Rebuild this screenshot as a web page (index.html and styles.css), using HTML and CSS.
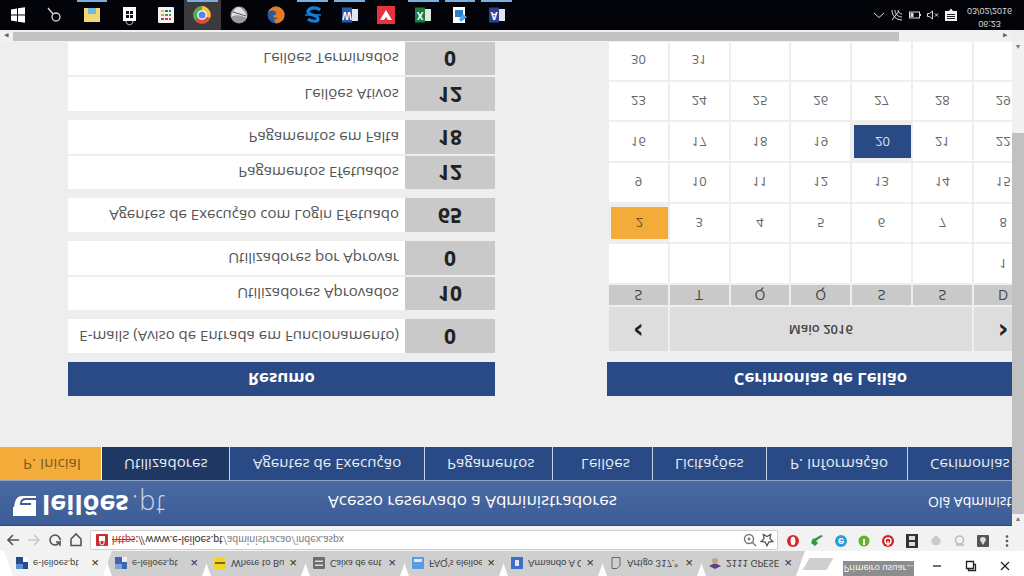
FILE: index.html
```html
<!DOCTYPE html>
<html lang="pt">
<head>
<meta charset="utf-8">
<title>e-leiloes.pt</title>
<link rel="stylesheet" href="styles.css">
</head>
<body>
<div class="screen">
  <div class="tabstrip">
    <div class="tab tab-active"><svg class="fav" viewBox="0 0 12 12"><rect width="12" height="12" fill="#2a4a8c"/><rect x="0" y="0" width="7" height="5" fill="#5b8fd0"/><rect x="7" y="7" width="5" height="5" fill="#fff"/></svg><span class="tab-title">e-leiloes.pt</span><span class="tab-x">✕</span></div>
    <div class="tab"><svg class="fav" viewBox="0 0 12 12"><rect width="12" height="12" fill="#3f66a8"/><rect x="0" y="0" width="7" height="5" fill="#7ba4d8"/><rect x="7" y="7" width="5" height="5" fill="#eee"/></svg><span class="tab-title">e-leiloes.pt</span><span class="tab-x">✕</span></div>
    <div class="tab"><svg class="fav" viewBox="0 0 12 12"><rect width="12" height="12" rx="1" fill="#f5d327"/><rect x="1" y="5" width="10" height="2" fill="#7a6a10"/></svg><span class="tab-title">Where to Bu</span><span class="tab-x">✕</span></div>
    <div class="tab"><svg class="fav" viewBox="0 0 12 12"><rect width="12" height="12" rx="1" fill="#6d6d6d"/><rect x="2" y="3" width="8" height="1.5" fill="#ddd"/><rect x="2" y="7" width="8" height="1.5" fill="#ddd"/></svg><span class="tab-title">Caixa de ent</span><span class="tab-x">✕</span></div>
    <div class="tab"><svg class="fav" viewBox="0 0 12 12"><rect width="12" height="12" rx="1" fill="#5a9be8"/><rect x="2" y="7" width="8" height="3" fill="#dce9fa"/></svg><span class="tab-title">FAQ's eleiloe</span><span class="tab-x">✕</span></div>
    <div class="tab"><svg class="fav" viewBox="0 0 12 12"><rect width="12" height="12" fill="#3d6fc4"/><rect x="4" y="3" width="4" height="6" fill="#dce6f6"/></svg><span class="tab-title">Armando A O</span><span class="tab-x">✕</span></div>
    <div class="tab"><svg class="fav" viewBox="0 0 12 12"><path d="M2 .5h5l3 3v8H2z" fill="none" stroke="#666"/></svg><span class="tab-title">Artigo 317.º</span><span class="tab-x">✕</span></div>
    <div class="tab"><svg class="fav" viewBox="0 0 12 12"><path d="M6 0l6 3-6 3-6-3z" fill="#5a3f8a"/><circle cx="6" cy="8" r="3" fill="#c9a27a"/></svg><span class="tab-title">2111 GPESE</span><span class="tab-x">✕</span></div>
    <div class="newtab"></div>
    <div class="win-area">
      <div class="profile">Primeiro usuar…</div>
      <svg class="win-btn" viewBox="0 0 12 12"><path d="M2 6h8" stroke="#222" stroke-width="1.3"/></svg>
      <svg class="win-btn" viewBox="0 0 12 12"><path d="M3.5 3V1.5h7v6H9M1.5 3.5h7v7h-7z" fill="none" stroke="#222" stroke-width="1.3"/></svg>
      <svg class="win-btn" viewBox="0 0 12 12"><path d="M2 2l8 8M10 2l-8 8" stroke="#222" stroke-width="1.2"/></svg>
    </div>
  </div>

  <div class="toolbar">
    <svg class="nav-ic" viewBox="0 0 16 16"><path d="M14 8H3M8 3L3 8l5 5" fill="none" stroke="#555" stroke-width="1.6"/></svg>
    <svg class="nav-ic" viewBox="0 0 16 16"><path d="M2 8h11M8 3l5 5-5 5" fill="none" stroke="#c9c9c9" stroke-width="1.6"/></svg>
    <svg class="nav-ic" viewBox="0 0 16 16"><path d="M13 8a5 5 0 1 1-1.6-3.7L13 6V2M13 6H9" fill="none" stroke="#555" stroke-width="1.6"/></svg>
    <svg class="nav-ic" viewBox="0 0 16 16"><path d="M3 2.5h10V9l-5 5-5-5z" fill="none" stroke="#555" stroke-width="1.6"/></svg>
    <div class="urlbar">
      <svg class="sec-ic" viewBox="0 0 12 12"><rect width="12" height="12" rx="1" fill="#c9302c"/><rect x="3" y="5" width="6" height="5" fill="#fff"/><path d="M4 5V3a2 2 0 0 1 4 0v2" fill="none" stroke="#fff"/></svg>
      <span class="url"><span class="url-https">https</span><span class="url-host">://www.e-leiloes.pt</span>/administracao/index.aspx</span>
      <span class="url-spacer"></span>
      <svg class="url-ic" viewBox="0 0 14 14"><circle cx="6" cy="8" r="4.5" fill="none" stroke="#777" stroke-width="1.4"/><circle cx="6" cy="8" r="1.4" fill="#777"/><path d="M9 5l4-4" stroke="#777" stroke-width="1.4"/></svg>
      <svg class="url-ic" viewBox="0 0 14 14"><path d="M7 1.2l1.8 3.8 4.1.5-3 2.9.8 4.1L7 10.5l-3.7 2 .8-4.1-3-2.9 4.1-.5z" fill="none" stroke="#555" stroke-width="1.3"/></svg>
    </div>
    <div class="exts">
      <svg class="ext" viewBox="0 0 14 14"><circle cx="7" cy="7" r="6" fill="#d8262c"/><ellipse cx="7" cy="7" rx="2.4" ry="4.2" fill="#fff"/></svg>
      <svg class="ext" viewBox="0 0 14 14"><path d="M1 5l4-3 3 3-2 2 7 5-2 1-7-4-1 1z" fill="#2e9a3c"/></svg>
      <svg class="ext" viewBox="0 0 14 14"><circle cx="7" cy="7" r="6" fill="#2a9fd8"/><text x="7" y="10.5" class="ext-letter">e</text></svg>
      <svg class="ext" viewBox="0 0 14 14"><circle cx="7" cy="7" r="5.5" fill="#62b22f"/><path d="M7 3v6" stroke="#fff" stroke-width="2"/></svg>
      <svg class="ext" viewBox="0 0 14 14"><circle cx="7" cy="7" r="6" fill="#d42027"/><circle cx="7" cy="7" r="3" fill="none" stroke="#fff" stroke-width="1.4"/><path d="M7 2v5" stroke="#fff" stroke-width="1.4"/></svg>
      <svg class="ext" viewBox="0 0 14 14"><rect x="1" width="12" height="14" fill="#333"/><rect x="4" y="2" width="6" height="4" fill="#ddd"/><rect x="4" y="8" width="6" height="4" fill="#ddd"/></svg>
      <svg class="ext" viewBox="0 0 14 14"><path d="M2 8l5 5 5-5-2-5H4z" fill="#c9c9c9"/></svg>
      <svg class="ext" viewBox="0 0 14 14"><circle cx="6.5" cy="8" r="4" fill="none" stroke="#bdbdbd" stroke-width="1.6"/><path d="M3 3h8" stroke="#bdbdbd" stroke-width="1.6"/></svg>
      <svg class="ext" viewBox="0 0 14 14"><rect x="1" y="1" width="12" height="12" rx="1" fill="#555"/><path d="M7 3l3 5a3 3 0 0 1-6 0z" fill="#ddd"/></svg>
      <svg class="ext ext-menu" viewBox="0 0 14 14"><circle cx="7" cy="2.5" r="1.3" fill="#555"/><circle cx="7" cy="7" r="1.3" fill="#555"/><circle cx="7" cy="11.5" r="1.3" fill="#555"/></svg>
    </div>
  </div>

  <div class="page">
    <div class="viewport">
      <header class="site-head">
        <div class="logo"><svg class="logo-mark" viewBox="0 0 23 20"><path d="M0 0h23v20H9c-4 0-6-3-7-6L1 9H0z" fill="#fff"/><path d="M7 12h11M8 12c0 3 2 5 5 5h10" fill="none" stroke="#3d5d98" stroke-width="1.8"/></svg><b class="logo-name">leilões</b><span class="logo-tld">.pt</span></div>
        <div class="access">Acesso reservado a Administradores</div>
        <div class="hello">Olá Administrador</div>
      </header>
      <nav class="site-nav">
        <a class="nav-item nav-home">P. Inicial</a>
        <a class="nav-item nav-current">Utilizadores</a>
        <a class="nav-item w-agents">Agentes de Execução</a>
        <a class="nav-item w-pay">Pagamentos</a>
        <a class="nav-item w-auc">Leilões</a>
        <a class="nav-item w-bid">Licitações</a>
        <a class="nav-item w-info">P. Informação</a>
        <a class="nav-item w-cer">Cerimonias</a>
      </nav>
      <main class="columns">
        <section class="col">
          <h2 class="panel-title">Resumo</h2>
          <div class="group">
            <div class="stat"><span class="stat-label">E-mails (Aviso de Entrada em Funcionamento)</span><span class="stat-value">0</span></div>
          </div>
          <div class="group">
            <div class="stat"><span class="stat-label">Utilizadores Aprovados</span><span class="stat-value">10</span></div>
            <div class="stat"><span class="stat-label">Utilizadores por Aprovar</span><span class="stat-value">0</span></div>
          </div>
          <div class="group">
            <div class="stat"><span class="stat-label">Agentes de Execução com Login Efetuado</span><span class="stat-value">65</span></div>
          </div>
          <div class="group">
            <div class="stat"><span class="stat-label">Pagamentos Efetuados</span><span class="stat-value">12</span></div>
            <div class="stat"><span class="stat-label">Pagamentos em Falta</span><span class="stat-value">18</span></div>
          </div>
          <div class="group">
            <div class="stat"><span class="stat-label">Leilões Ativos</span><span class="stat-value">12</span></div>
            <div class="stat"><span class="stat-label">Leilões Terminados</span><span class="stat-value">0</span></div>
          </div>
        </section>
        <section class="col">
          <h2 class="panel-title">Cerimonias de Leilão</h2>
          <div class="calendar">
            <div class="cal-nav">‹</div><div class="cal-month">Maio 2016</div><div class="cal-nav">›</div>
            <div class="wd">S</div><div class="wd">T</div><div class="wd">Q</div><div class="wd">Q</div><div class="wd">S</div><div class="wd">S</div><div class="wd">D</div>
            <div class="day"></div><div class="day"></div><div class="day"></div><div class="day"></div><div class="day"></div><div class="day"></div><div class="day">1</div>
            <div class="day day-orange">2</div><div class="day">3</div><div class="day">4</div><div class="day">5</div><div class="day">6</div><div class="day">7</div><div class="day">8</div>
            <div class="day">9</div><div class="day">10</div><div class="day">11</div><div class="day">12</div><div class="day">13</div><div class="day">14</div><div class="day">15</div>
            <div class="day">16</div><div class="day">17</div><div class="day">18</div><div class="day">19</div><div class="day day-blue">20</div><div class="day">21</div><div class="day">22</div>
            <div class="day">23</div><div class="day">24</div><div class="day">25</div><div class="day">26</div><div class="day">27</div><div class="day">28</div><div class="day">29</div>
            <div class="day">30</div><div class="day">31</div><div class="day"></div><div class="day"></div><div class="day"></div><div class="day"></div><div class="day"></div>
          </div>
        </section>
      </main>
    </div>
    <div class="vscroll">
      <div class="vs-arrow">▾</div>
      <div class="vs-thumb"></div>
      <div class="vs-rest"></div>
      <div class="vs-arrow">▴</div>
    </div>
  </div>

  <div class="hscroll">
    <div class="hs-arrow">◂</div>
    <div class="hs-thumb"></div>
    <div class="hs-rest"></div>
    <div class="hs-arrow">▸</div>
    <div class="hs-corner"></div>
  </div>

  <footer class="taskbar">
    <div class="tb-app"><svg class="tb-ic" viewBox="0 0 24 24"><path d="M5 6.5l6-1v6H5zM12 5.3l7-1.1v7.3h-7zM5 12.5h6v6l-6-1zM12 12.5h7v7.3l-7-1.100z" fill="#fff"/></svg></div>
    <div class="tb-app"><svg class="tb-ic" viewBox="0 0 24 24"><circle cx="13" cy="10" r="4" fill="none" stroke="#ddd" stroke-width="1.3"/><path d="M10 13l-5 6" stroke="#ddd" stroke-width="1.3"/></svg></div>
    <div class="tb-app tb-open"><svg class="tb-ic" viewBox="0 0 24 24"><path d="M4 5h16v14H4z" fill="#f3d774"/><path d="M8 13h8v6H8z" fill="#6fb8e8"/></svg></div>
    <div class="tb-app"><svg class="tb-ic" viewBox="0 0 24 24"><path d="M6 6h13v14H6z" fill="#fff"/><path d="M9 9h3v3H9zM13 9h3v3h-3zM9 13h3v3H9zM13 13h3v3h-3z" fill="#111"/><path d="M9 6c0-5 7-5 7 0" fill="none" stroke="#ccc"/></svg></div>
    <div class="tb-app"><svg class="tb-ic" viewBox="0 0 24 24"><rect x="4" y="4" width="16" height="16" rx="1" fill="#f2f2f2"/><path d="M7 7h3v2H7z" fill="#d33"/><path d="M11 7h3v2h-3z" fill="#d33"/><path d="M15 7h2v2h-2z" fill="#d33"/><path d="M7 11h3v2H7z" fill="#e8a020"/><path d="M11 11h3v2h-3z" fill="#3a3"/><path d="M15 11h2v2h-2z" fill="#3a3"/><path d="M7 15h3v2H7z" fill="#e8c020"/><path d="M11 15h3v2h-3z" fill="#36a"/><path d="M15 15h2v2h-2z" fill="#36a"/></svg></div>
    <div class="tb-app tb-open tb-active"><svg class="tb-ic" viewBox="0 0 24 24"><circle cx="12" cy="12" r="9" fill="#e2493a"/><path d="M12 12L5 7a9 9 0 0 0 7 14z" fill="#4caf50"/><path d="M12 12l8-3a9 9 0 0 1-8 12z" fill="#f6c53c"/><circle cx="12" cy="12" r="4.2" fill="#4a8af0" stroke="#fff" stroke-width="1.3"/></svg></div>
    <div class="tb-app"><svg class="tb-ic" viewBox="0 0 24 24"><circle cx="12" cy="12" r="8.5" fill="#9a9a9a"/><path d="M4 10c5 3 10 2 16-1-1 6-5 10-9 11-4-2-6-6-7-10z" fill="#e3e3e3"/><path d="M6 15l13-4" stroke="#555"/></svg></div>
    <div class="tb-app"><svg class="tb-ic" viewBox="0 0 24 24"><circle cx="12" cy="12" r="8.5" fill="#2a5a9e"/><path d="M12 3.5a8.5 8.5 0 1 1-8 11c2 2 6 3 8 0 1-2-1-3-3-3 0-2 3-3 5-2-1-2-3-2-4-2 1-2 1-3 2-4z" fill="#e8791f"/></svg></div>
    <div class="tb-app tb-open"><svg class="tb-ic" viewBox="0 0 24 24"><path d="M19 17c-3 3-10 3-12-1-1-5 10-3 10-8 0-3-6-3-10 0" fill="none" stroke="#0f7fe0" stroke-width="3.2"/><path d="M4 12h16" stroke="#0f7fe0" stroke-width="1.5"/></svg></div>
    <div class="tb-app tb-open"><svg class="tb-ic" viewBox="0 0 24 24"><rect x="11" y="6" width="9" height="12" fill="#dfe6f2"/><rect x="4" y="4.5" width="10" height="15" fill="#2a5aa8"/><text x="9" y="15.5" class="tb-letter">W</text></svg></div>
    <div class="tb-app"><svg class="tb-ic" viewBox="0 0 24 24"><rect x="3" y="3" width="18" height="18" fill="#e5323e"/><path d="M6 7l6 10 6-10h-4l-2 3-2-3z" fill="#fff"/></svg></div>
    <div class="tb-app tb-open"><svg class="tb-ic" viewBox="0 0 24 24"><rect x="11" y="6" width="9" height="12" fill="#dcebdf"/><rect x="4" y="4.5" width="10" height="15" fill="#1f7a45"/><text x="9" y="15.5" class="tb-letter">X</text></svg></div>
    <div class="tb-app tb-open"><svg class="tb-ic" viewBox="0 0 24 24"><path d="M5 4h12v16H5z" fill="#fff"/><path d="M7 10h8v7H7z" fill="#2a7fd0"/><path d="M13 5l6 5-4 3-4-5z" fill="#5aa2e0"/></svg></div>
    <div class="tb-app tb-open"><svg class="tb-ic" viewBox="0 0 24 24"><rect x="11" y="6" width="9" height="12" fill="#dfe3f2"/><rect x="4" y="4.5" width="10" height="15" fill="#2f3f92"/><text x="9" y="15.5" class="tb-letter">A</text></svg></div>
    <div class="tb-spacer"></div>
    <div class="tray">
      <svg class="tray-ic" viewBox="0 0 14 14"><path d="M2 9l5-4.5L12 9" fill="none" stroke="#ddd" stroke-width="1"/></svg>
      <svg class="tray-ic" viewBox="0 0 14 14"><path d="M2 12c0-6 4-10 10-10M5 12c0-4 3-7 7-7M8 12c0-2 2-4 4-4" fill="none" stroke="#ddd"/><path d="M2 2l7 9" stroke="#ddd"/></svg>
      <svg class="tray-ic" viewBox="0 0 14 14"><rect x="1.5" y="4" width="10" height="6" fill="none" stroke="#ddd"/><rect x="2.5" y="5" width="3" height="4" fill="#ddd"/><rect x="12" y="6" width="1" height="2" fill="#ddd"/></svg>
      <svg class="tray-ic" viewBox="0 0 14 14"><path d="M1.5 5.500h2l3-2.500v8l-3-2.500h-2z" fill="none" stroke="#ddd"/><path d="M9 5.500l3 3M12 5.500l-3 3" stroke="#ddd"/></svg>
      <svg class="tray-ic" viewBox="0 0 14 14"><path d="M1 1h12v10H1z" fill="#f4f4f4"/><path d="M3 3.500h8M3 5.500h8M3 7.500h8" stroke="#222"/><path d="M5 11h4l-2 2.500z" fill="#f4f4f4"/></svg>
      <div class="clock"><div>06:23</div><div>03/02/2016</div></div>
    </div>
  </footer>
</div>
</body>
</html>
```
FILE: styles.css
```css
* { box-sizing: border-box; }
html, body { margin: 0; padding: 0; background: #000; }
body { width: 1024px; height: 576px; overflow: hidden; font-family: "Open Sans", "Liberation Sans", sans-serif; }
.screen {
  width: 1024px; height: 576px; overflow: hidden;
  display: flex; flex-direction: column;
  transform: scaleY(-1);
  background: #fff;
}

/* browser tabs */
.tabstrip { height: 25px; flex: none; display: flex; align-items: stretch; background: #fff; padding-left: 4px; }
.tab {
  width: 108px; margin-right: -9px; flex: none;
  display: flex; align-items: center; padding: 0 13px 0 12px; gap: 5px;
  background: #cfcfcf; color: #444;
  clip-path: polygon(9px 0, calc(100% - 9px) 0, 100% 100%, 0 100%);
}
.tab-active { background: #f2f2f2; position: relative; z-index: 1; }
.fav { width: 12px; height: 12px; flex: none; }
.tab-title { flex: 1; white-space: nowrap; overflow: hidden; font-family: Lato, sans-serif; font-size: 9.5px; }
.tab-x { font-size: 10px; color: #333; flex: none; }
.newtab { width: 24px; height: 12px; margin: 6px 0 0 10px; background: #cfcfcf; transform: skewX(30deg); flex: none; }
.win-area { flex: 1; display: flex; justify-content: flex-end; align-items: flex-start; padding-right: 2px; }
.profile { width: 71px; height: 15px; background: #8d8d8d; color: #fff; font-size: 9px; line-height: 15px; text-align: center; margin-right: 6px; white-space: nowrap; overflow: hidden; }
.win-btn { width: 12px; height: 12px; margin: 4px 11px 0; flex: none; }

/* browser toolbar */
.toolbar { height: 25px; flex: none; display: flex; align-items: flex-start; background: #f2f2f2; padding: 1px 0 0 5px; }
.nav-ic { width: 16px; height: 16px; margin: 2px 5px 0 0; flex: none; }
.urlbar { width: 691px; height: 20px; margin-left: 1px; background: #fff; border: 1px solid #cfcfcf; border-radius: 2px; display: flex; align-items: center; padding: 0 3px 0 5px; font-family: Lato, sans-serif; font-size: 10.5px; color: #808080; }
.sec-ic { width: 12px; height: 12px; flex: none; margin-right: 4px; }
.url { white-space: nowrap; }
.url-https { color: #c9302c; text-decoration: line-through; }
.url-host { color: #333; }
.url-spacer { flex: 1; }
.url-ic { width: 14px; height: 14px; margin-left: 3px; flex: none; }
.exts { flex: 1; display: flex; padding: 2px 0 0 8.5px; }
.ext { width: 14px; height: 14px; margin-right: 9.8px; flex: none; }
.ext-letter { font-family: "Liberation Sans", sans-serif; font-size: 11px; font-weight: 700; fill: #fff; text-anchor: middle; }

/* page */
.page { height: 484px; flex: none; display: flex; background: #eee; }
.viewport { width: 1012px; flex: none; overflow: hidden; }
.site-head { width: 1100px; height: 46px; display: flex; align-items: center; background: linear-gradient(#3d5d98, #4a69a0); color: #fff; border-bottom: 1px solid #8ea3c6; border-top: 1px solid #2d4a80; }
.logo { width: 328px; padding: 0 0 5px 13px; display: flex; align-items: flex-end; font-size: 27px; line-height: 30px; color: #fff; }
.logo-mark { width: 23px; height: 20px; margin: 0 6px 6px 0; flex: none; }
.logo-name { font-weight: 700; }
.logo-tld { font-weight: 300; color: #c8d2e4; margin-left: 3px; letter-spacing: 1px; }
.access { width: 600px; font-size: 17px; }
.hello { font-size: 14px; white-space: nowrap; }
.site-nav { width: 1100px; height: 33px; display: flex; background: #2a4a85; color: #e8edf5; font-size: 15px; letter-spacing: .06px; line-height: 31px; }
.nav-item { padding-left: 23px; width: 114px; border-right: 1px solid #c5cfe0; flex: none; white-space: nowrap; }
.nav-home { width: 102px; background: #f3ac39; color: #7a5a20; border-right: 1px solid #fff; }
.nav-current { width: 128px; background: #1e3763; padding-left: 22px; }
.w-agents { width: 195px; }
.w-pay { width: 128px; padding-left: 22px; }
.w-auc { width: 100px; padding-left: 28px; }
.w-bid { padding-left: 22px; }
.w-info { width: 141px; }
.w-cer { padding-left: 22px; width: 120px; border-right: 0; }
.columns { width: 1034px; display: flex; padding: 51px 0 0 68px; gap: 112px; }
.col { width: 427px; flex: none; }
.panel-title { height: 34px; margin: 0 0 9px; background: #2a4a85; color: #fff; font-size: 16.7px; font-weight: 700; line-height: 33px; text-align: center; }
.group { display: flex; flex-direction: column; gap: 2px; margin-bottom: 9px; }
.stat { height: 33.7px; display: flex; flex: none; }
.stat-label { width: 337px; background: #fff; color: #555; font-size: 15px; line-height: 33px; text-align: right; padding-right: 6px; white-space: nowrap; }
.stat-value { width: 90px; background: #c9c9c9; color: #222; font-size: 21px; font-weight: 700; line-height: 32px; text-align: center; }

/* calendar */
.calendar { display: grid; grid-template-columns: repeat(7, 58.8px); gap: 2px; padding: 2px 0 0 2px; grid-template-rows: 44px 20px; grid-auto-rows: 38.7px; }
.cal-nav { background: #ddd; color: #222; font: 700 26px/40px "DejaVu Sans", sans-serif; text-align: center; }
.cal-month { grid-column: span 5; background: #ddd; color: #444; font-size: 13px; font-weight: 600; line-height: 43px; text-align: center; }
.wd { background: #c9c9c9; color: #444; font-size: 14px; line-height: 20px; text-align: center; }
.day { background: #fff; color: #666; font-size: 13px; display: flex; align-items: center; justify-content: center; }
.day-orange, .day-blue { background-clip: content-box; padding: 3px 0 3px 2px; }
.day-orange { background-color: #f3ac39; color: #6a5020; }
.day-blue { background-color: #2a4a85; color: #d8e0ee; }

/* scrollbars */
.vscroll { width: 12px; flex: none; display: flex; flex-direction: column; background: #f1f1f1; }
.vs-arrow { height: 12px; color: #777; font-size: 8px; line-height: 12px; text-align: center; }
.vs-thumb { height: 381px; background: #c1c1c1; }
.vs-rest { flex: 1; }
.hscroll { height: 12px; flex: none; display: flex; background: #f1f1f1; }
.hs-arrow { width: 13px; color: #666; font-size: 9px; line-height: 12px; text-align: center; }
.hs-thumb { width: 886px; margin: 1px 0 2px; background: #c1c1c1; }
.hs-rest { flex: 1; }
.hs-corner { width: 12px; background: #eee; }

/* taskbar */
.taskbar { height: 30px; flex: 1; display: flex; background: #02040a; }
.tb-app { width: 36.8px; flex: none; display: flex; align-items: center; justify-content: center; position: relative; }
.tb-active { background: #3b3b3d; }
.tb-open::after { content: ""; position: absolute; left: 3px; right: 3px; bottom: 0; height: 2px; background: #78aee0; }
.tb-ic { width: 24px; height: 24px; }
.tb-letter { font-family: "Liberation Sans", sans-serif; font-size: 10px; font-weight: 700; fill: #fff; text-anchor: middle; }
.tb-spacer { flex: 1; }
.tray { display: flex; align-items: center; padding-right: 12px; gap: 4px; }
.tray-ic { width: 14px; height: 14px; flex: none; }
.clock { color: #d8d8d8; font-family: "Liberation Sans", sans-serif; font-size: 9px; line-height: 13px; text-align: center; margin: 0 0 4px 5px; }
```
